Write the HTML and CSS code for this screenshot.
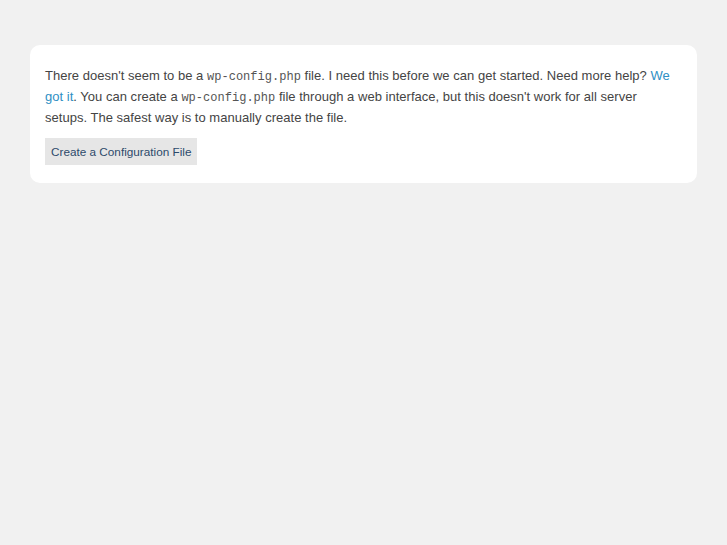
FILE: index.html
```html
<!DOCTYPE html>
<html>
<head>
<meta charset="utf-8">
<title>WordPress › Setup Configuration File</title>
<link rel="stylesheet" href="styles.css">
</head>
<body>
<div class="card">
<p class="msg">There doesn't seem to be a <code>wp-config.php</code> file. I need this before we can get started. Need more help? <a href="#">We got it</a>. You can create a <code>wp-config.php</code> file through a web interface, but this doesn't work for all server setups. The safest way is to manually create the file.</p>
<p class="step"><a href="#" class="button">Create a Configuration File</a></p>
</div>
</body>
</html>
```
FILE: styles.css
```css
html {
  background: #f1f1f1;
}
body {
  margin: 45px 30px;
  font-family: "Liberation Sans", Arial, sans-serif;
  color: #444;
}
.card {
  background: #fff;
  border-radius: 10px;
  padding: 20px 18px 18px 15px;
}
.msg {
  margin: 0;
  font-size: 13px;
  line-height: 21px;
  letter-spacing: 0.02px;
}
.msg code {
  font-family: "Liberation Mono", monospace;
  font-size: 12px;
  line-height: 1;
  color: #555;
}
.msg a {
  color: #2e8fc4;
  text-decoration: none;
}
.step {
  margin: 10px 0 0;
  line-height: 0;
}
.button {
  display: inline-block;
  background: #e6e6e6;
  color: #2d4a6b;
  font-size: 11.75px;
  line-height: 27px;
  padding: 0 6px;
  text-decoration: none;
}
```
